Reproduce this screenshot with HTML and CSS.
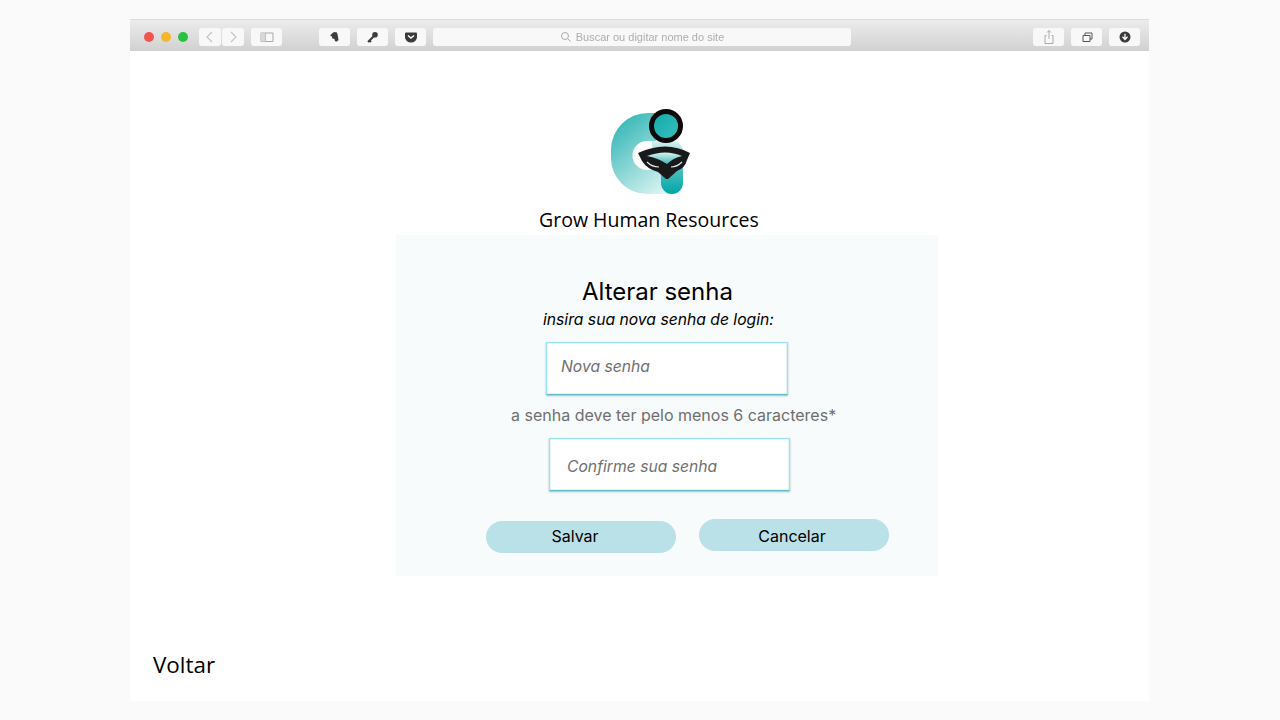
FILE: index.html
```html
<!DOCTYPE html>
<html lang="pt-BR">
<head>
    <meta charset="utf-8">
    <title>Alterar senha</title>
    <link rel="stylesheet" href="styles.css">
</head>
<body>
    <div class="window">
        <div class="toolbar">
            <span class="dot red"></span>
            <span class="dot yellow"></span>
            <span class="dot green"></span>

            <div class="tool nav first">
                <svg width="22" height="18" viewBox="0 0 22 18"><path d="M13 4 8 9l5 5" fill="none" stroke="#c4c4c4" stroke-width="1.2"/></svg>
            </div>
            <div class="tool nav">
                <svg width="22" height="18" viewBox="0 0 22 18"><path d="M9 4l5 5-5 5" fill="none" stroke="#c4c4c4" stroke-width="1.2"/></svg>
            </div>
            <div class="tool sidebar">
                <svg width="31" height="18" viewBox="0 0 31 18"><path d="M10 5h12v8.500H10zM14.500 5v8.500" fill="none" stroke="#a8a8a8"/><path d="M10 5h4.500v8.500H10z" fill="#d8d8d8"/></svg>
            </div>

            <div class="tool ext first-ext">
                <svg width="31" height="18" viewBox="0 0 31 18"><path d="M13 5.500l2-1.500 3 .5.800 3 .7 4.500-1.500 1.500-2-.3-.5-2.200-2-.5-1-2.500-1.500-.5z" fill="#3d3d3d"/></svg>
            </div>
            <div class="tool ext">
                <svg width="31" height="18" viewBox="0 0 31 18"><circle cx="18" cy="6.800" r="2.800" fill="#3d3d3d"/><path d="M17 8l-6 6M12.500 12.500l1.500 1.500" stroke="#3d3d3d" stroke-width="2" fill="none"/></svg>
            </div>
            <div class="tool ext">
                <svg width="31" height="18" viewBox="0 0 31 18"><path d="M11 4.500h10a1 1 0 0 1 1 1v3.500a6 5.500 0 0 1-12 0V5.500a1 1 0 0 1 1-1z" fill="#3a3a3a"/><path d="M13 7.500l3 2.600 3-2.600" fill="none" stroke="#fff" stroke-width="1.500"/></svg>
            </div>

            <div class="address">
                <svg width="12" height="12" viewBox="0 0 12 12"><circle cx="5" cy="5" r="3.500" fill="none" stroke="#aaa"/><path d="M7.600 7.600l3 3" stroke="#aaa"/></svg>
                <span>Buscar ou digitar nome do site</span>
            </div>

            <div class="tool ext">
                <svg width="31" height="18" viewBox="0 0 31 18"><path d="M13.500 7.500H12v8h8v-8h-1.500M16 11V2.500M14 4.500l2-2 2 2" fill="none" stroke="#aaa"/></svg>
            </div>
            <div class="tool ext">
                <svg width="31" height="18" viewBox="0 0 31 18"><path d="M12 7.500h7v6h-7z" fill="none" stroke="#555"/><path d="M14 7.500V5h7v6h-2" fill="none" stroke="#555"/></svg>
            </div>
            <div class="tool ext">
                <svg width="31" height="18" viewBox="0 0 31 18"><circle cx="16" cy="9" r="5.500" fill="#3a3a3a"/><path d="M16 5.800v5M13.500 8.800l2.500 2.700 2.500-2.700" fill="none" stroke="#fff" stroke-width="1.300"/></svg>
            </div>
        </div>

        <div class="content">
            <div class="brand">
                <svg class="logo" width="120" height="100" viewBox="0 0 120 100">
                    <defs>
                        <linearGradient id="gshape" x1="0.15" y1="0" x2="0.8" y2="1">
                            <stop offset="0" stop-color="#2db4b4"/>
                            <stop offset="1" stop-color="#dcf4f2"/>
                        </linearGradient>
                        <linearGradient id="stem" x1="0" y1="0" x2="0" y2="1">
                            <stop offset="0" stop-color="#d6f0ee"/>
                            <stop offset="0.6" stop-color="#3fbdbb"/>
                            <stop offset="1" stop-color="#00a5a6"/>
                        </linearGradient>
                        <linearGradient id="head" x1="0" y1="0" x2="1" y2="1">
                            <stop offset="0" stop-color="#0fa8a8"/>
                            <stop offset="1" stop-color="#3cc0bf"/>
                        </linearGradient>
                        <linearGradient id="lens" x1="0" y1="0" x2="0" y2="1">
                            <stop offset="0" stop-color="#d6f2f0"/>
                            <stop offset="1" stop-color="#3fb9b8"/>
                        </linearGradient>
                    </defs>
                    <path d="M66 13H58A37 37 0 0 0 21 50V58A36 36 0 0 0 57 94H85V70H57A14.500 14.500 0 0 1 57 41H66z" fill="url(#gshape)"/>
                    <path d="M62 41H82A11 11 0 0 1 93 52V83A11 11 0 0 1 71 83V70H62z" fill="url(#stem)"/>
                    <circle cx="76" cy="26" r="14.500" fill="url(#head)" stroke="#0a0a0a" stroke-width="5"/>
                    <path d="M48 53Q76 40 100 53L97 60Q95 68 87 71L78 79H76L68 72Q57 69 52 61z" fill="#17191a"/>
                    <path d="M57 56Q76 49 92 56Q83 58 77 64Q68 58 57 56z" fill="url(#lens)"/>
                    <path d="M57 62Q62 67 69 67M92 62Q87 67 81 67" fill="none" stroke="#dfeaea" stroke-width="1.200"/>
                </svg>
                <div class="brand-name">Grow Human Resources</div>
            </div>

            <div class="card">
                <h1 class="title">Alterar senha</h1>
                <p class="subtitle">insira sua nova senha de login:</p>
                <input class="field field-new" type="text" placeholder="Nova senha">
                <p class="hint">a senha deve ter pelo menos 6 caracteres*</p>
                <input class="field field-confirm" type="text" placeholder="Confirme sua senha">
                <div class="actions">
                    <button class="btn btn-save">Salvar</button>
                    <button class="btn btn-cancel">Cancelar</button>
                </div>
            </div>

            <a class="back" href="#">Voltar</a>
        </div>
    </div>
</body>
</html>
```

FILE: styles.css
```css
* {
    box-sizing: border-box;
}

html, body {
    height: 100%;
}

body {
    margin: 0;
    padding: 19px 131px 19px 130px;
    background-color: #fafafa;
    font-family: "Inter", "Liberation Sans", sans-serif;
    color: #000000;
}

/*Browser window*/
.window {
    height: 682px;
    background-color: #ffffff;
    display: flex;
    flex-direction: column;
}

.toolbar {
    height: 32px;
    display: flex;
    align-items: center;
    padding-left: 14px;
    padding-top: 3px;
    border-top: 1px solid #dcdcdc;
    background: linear-gradient(#ececec, #d1d1d1);
    filter: blur(0.4px);
}

.dot {
    flex-shrink: 0;
    width: 10px;
    height: 10px;
    border-radius: 50%;
    margin-right: 7px;
}
.red { background-color: #f0544f; }
.yellow { background-color: #f6b52e; }
.green { background-color: #27c23f; }

.tool {
    flex-shrink: 0;
    height: 18px;
    display: flex;
    background-color: #f8f8f8;
    border-radius: 3px;
}
.nav {
    width: 22px;
    margin-right: 1px;
}
.nav.first {
    margin-left: 4px;
}
.sidebar {
    width: 31px;
    margin-left: 6px;
}
.ext {
    width: 31px;
    margin-right: 7px;
}
.first-ext {
    margin-left: 37px;
}

.address {
    flex-shrink: 0;
    width: 418px;
    height: 18px;
    margin-right: 182px;
    display: flex;
    align-items: center;
    justify-content: center;
    gap: 4px;
    background-color: #f8f8f8;
    border-radius: 3px;
    font-family: "Liberation Sans", sans-serif;
    font-size: 11px;
    font-weight: 400;
    color: #adadad;
}

/*Main*/
.content {
    flex: 1;
    display: flex;
    flex-direction: column;
}

.brand {
    height: 184px;
    padding-top: 49px;
    display: flex;
    flex-direction: column;
    align-items: flex-start;
}
.logo {
    display: block;
    flex-shrink: 0;
    margin-left: 460px;
}
.brand-name {
    flex-shrink: 0;
    margin-left: 409px;
    margin-top: 7px;
    font-family: "Open Sans", sans-serif;
    font-size: 19.500px;
    line-height: 26px;
    white-space: nowrap;
}

.card {
    width: 542px;
    height: 341px;
    margin-left: 266px;
    background-color: #f7fbfc;
    display: flex;
    flex-direction: column;
    align-items: flex-start;
}

.title {
    margin: 42px 0 0 186px;
    font-size: 24px;
    line-height: 29px;
    font-weight: 400;
    letter-spacing: -0.02px;
    white-space: nowrap;
}
.subtitle {
    margin: 4px 0 0 147px;
    font-size: 15.700px;
    line-height: 20px;
    font-style: italic;
    white-space: nowrap;
}

.field {
    display: block;
    width: 242px;
    height: 53px;
    padding: 0 14px;
    background-color: #ffffff;
    border: 1px solid #97e2ec;
    border-bottom-color: #5fbccb;
    border-radius: 1px;
    outline: none;
    box-shadow: inset 0 0 0 1px #e0f6f8, 0 1px 2px rgba(40, 110, 125, 0.45);
    font-family: "Inter", sans-serif;
    font-size: 15.700px;
    font-style: italic;
}
.field::placeholder {
    color: #707070;
    opacity: 1;
}
.field-new {
    margin: 12px 0 0 150px;
    padding-bottom: 5px;
}
.field-confirm {
    width: 241px;
    margin: 13px 0 0 153px;
    padding-left: 17px;
    padding-top: 4px;
}

.hint {
    margin: 10px 0 0 115px;
    font-size: 16px;
    line-height: 20px;
    color: #6f6f6f;
    white-space: nowrap;
}

.actions {
    display: flex;
    align-items: flex-start;
    gap: 23px;
    margin: 28px 0 0 90px;
}

.btn {
    width: 190px;
    height: 32px;
    border: none;
    border-radius: 16px;
    background-color: #bae1e8;
    font-family: "Inter", sans-serif;
    font-size: 16px;
    color: #000000;
}
.btn-save {
    margin-top: 2px;
    padding: 0 12px 2px 0;
}
.btn-cancel {
    padding: 2px 4px 0 0;
}

.back {
    margin: 75px 0 0 23px;
    width: 70px;
    font-family: "Open Sans", sans-serif;
    font-size: 22.400px;
    line-height: 28px;
    color: #000000;
    text-decoration: none;
}
```
